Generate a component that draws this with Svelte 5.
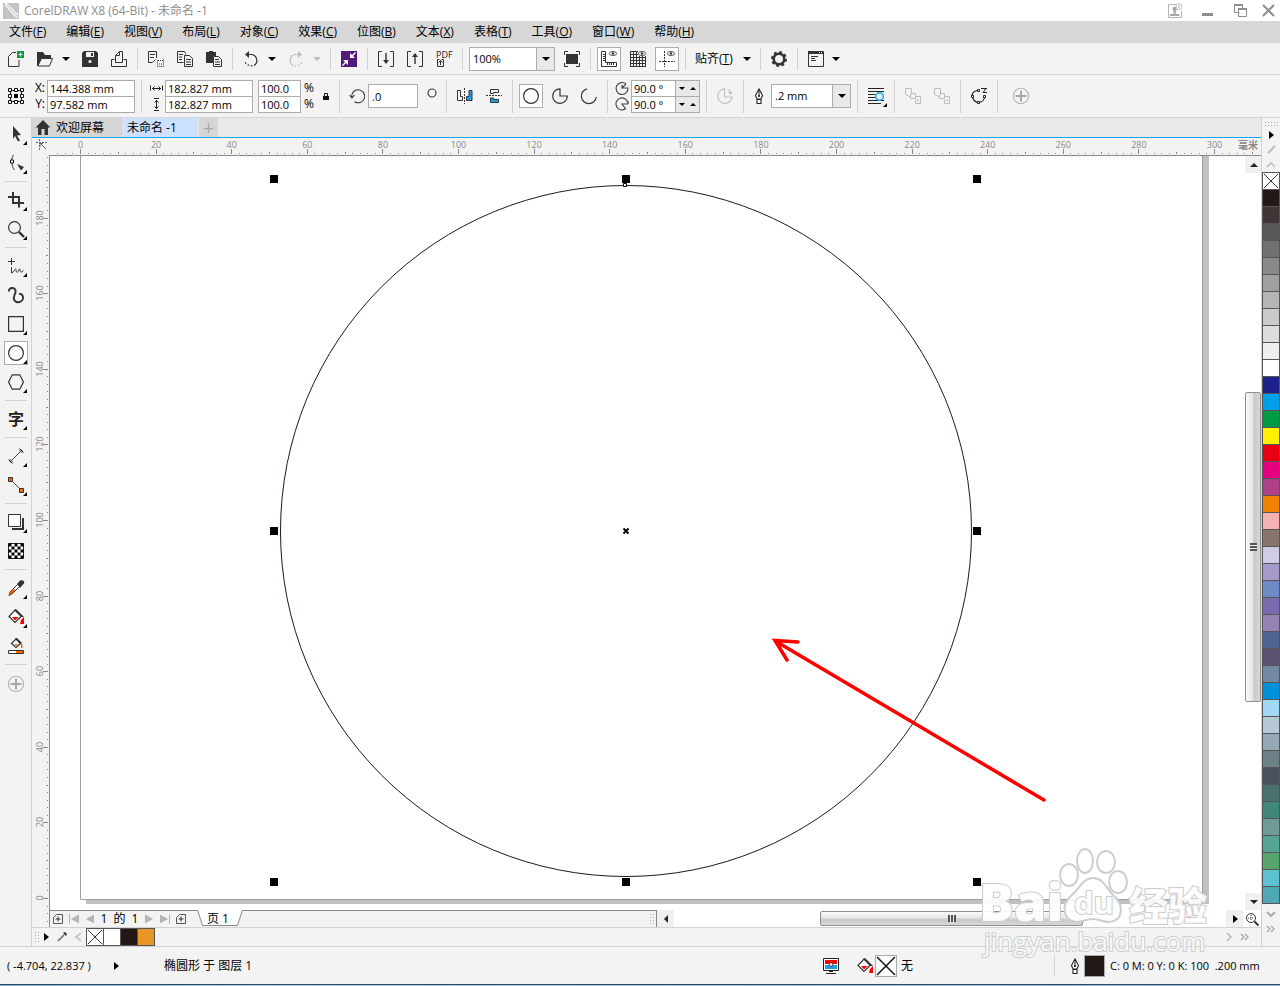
<script>
  const icons = {
    logo: '<path fill="#c4c4c4" d="M0 0h16v16H0z"/><path fill="#fff" d="M2 0l2 0 11 11v4L12 14 2 3z" opacity=".75"/><path fill="none" stroke="#c4c4c4" d="M4 2l10 11"/>',
    user: '<path fill="none" stroke="#b4b4b4" d="M9 1.500H1.500v13h13V8"/><path fill="#a8a8a8" d="M5.500 6a2.200 2.500 0 0 1 4.400 0c0 1-.6 2-1.200 2.500V11h3.500v2H3v-2h3.500V8.500C6 8 5.500 7 5.500 6z"/><circle cx="12" cy="3.500" r="3" fill="#fff" stroke="#c4c4c4"/><path stroke="#b4b4b4" d="M12 2v3"/>',
    min: '<path fill="#8e8e8e" d="M2 10h11v3H2z"/>',
    restore: '<path fill="none" stroke="#8e8e8e" d="M6.500 9.500h-5v-8h8v4"/><path stroke="#8e8e8e" stroke-width="2" d="M1 2h9M5 6h9"/><path fill="none" stroke="#8e8e8e" d="M5.500 5.500h8v8h-8z"/>',
    close: '<path stroke="#8e8e8e" stroke-width="2" d="M2 2l11 11M13 2L2 13"/>',
    new: '<path fill="none" stroke="#333" d="M8 1.500H4.500l-4 4v10h10.500V9"/><path fill="#0a9c3c" d="M9 0h7v7H9z"/><path stroke="#fff" d="M12.500 1.500v4M10.500 3.500h4"/>',
    open: '<path fill="#333" d="M0 1h6l2 3h6v3H5L1 15H0z"/><path fill="#f3f3f3" stroke="#333" d="M4.500 7.500h11l-3 7.500H.8z"/>',
    save: '<path fill="#333" d="M2 0h12l2 2v14H0V2z"/><path fill="#f3f3f3" d="M4 1h8v5H4z"/><path fill="#333" d="M9 2h2v3H9z"/><circle cx="8" cy="10.500" r="1.600" fill="#f3f3f3"/>',
    print: '<path fill="none" stroke="#333" d="M4.500 11.500h7v-11h-3l-4 4zM8.500.5v4h-4M3.500 8.500h-3v7h15v-7h-3"/>',
    cut: '<path fill="none" stroke="#333" d="M8.500 7V.5h-8v11h4l3-3M2 3.500h5M2 6.500h4"/><path fill="none" stroke="#333" stroke-dasharray="1 1" d="M15.500 8.500v7h-6v-6"/><path fill="none" stroke="#333" stroke-dasharray="1 1" d="M10 9.500h5M11 13h3"/>',
    copy: '<path fill="none" stroke="#333" d="M6.500 11.500h-6V.5h7l1 2v1M2 3.500h4M2 6h3M2 8.500h3"/><path fill="#f3f3f3" stroke="#333" d="M7.500 4.500h5l3 3v8h-8z"/><path stroke="#333" d="M9 8.500h5M9 11h5M9 13.500h5"/>',
    paste: '<path fill="#333" d="M0 1h3V0h4v1h3v4H7v7H0z"/><path fill="#f3f3f3" stroke="#333" d="M7.500 5.500h5l3 3v7h-8z"/><path stroke="#333" d="M9 8.500h4M9 11h5M9 13.500h5"/>',
    undo: '<path fill="none" stroke="#333" stroke-width="1.200" d="M4 3.500h5a6 6 0 0 1 2 11"/><path fill="#333" d="M6 0v7L2 3.500z"/><path fill="none" stroke="#333" stroke-width="1.300" stroke-dasharray="1.500 2" d="M9.500 14.700c-4 .5-7-1.500-8-5"/>',
    redo: '<path fill="none" stroke="#bdbdbd" stroke-width="1.200" d="M12 3.500H7a6 6 0 0 0-2 11"/><path fill="#bdbdbd" d="M10 0v7l4-3.500z"/><path fill="none" stroke="#bdbdbd" stroke-width="1.300" stroke-dasharray="1.500 2" d="M6.500 14.700c4 .5 7-1.500 8-5"/>',
    purple: '<path fill="#4f1a7b" d="M0 0h16v16H0z"/><path fill="#fff" d="M9 7V2l2 2 3-3 1 1-3 3 2 2zM7 9v5l-2-2-3 3-1-1 3-3-2-2z"/>',
    import: '<path fill="none" stroke="#333" d="M4 .5H.5v15H4M12 .5h3.500v15H12"/><path fill="#333" d="M7.300 2h1.400v7H11l-3 4-3-4h2.300z"/>',
    export: '<path fill="none" stroke="#333" d="M4 .5H.5v15H4M12 .5h3.500v15H12"/><path fill="#333" d="M7.300 13h1.400V6H11L8 2 5 6h2.300z"/>',
    pdf: '<path fill="none" stroke="#333" d="M3.500 8.500H1.500v7h6v-7h-2M4.500 14V9.500M2.500 11.500l2-2 2 2"/><text x="0" y="7" font-size="9" font-family="Open Sans" fill="#222">PDF</text>',
    full: '<path fill="#333" d="M2 3h12v10H2z"/><path fill="none" stroke="#333" d="M.5 4V.5H4M12 .5h3.500V4M15.500 12v3.500H12M4 15.500H.5V12"/>',
    ruler: '<path fill="none" stroke="#333" d="M.5.5h4v11h11v4H.5zM2 3.500h2M2 5.500h2M2 7.500h2M2 9.500h2M6.500 12v2M8.500 12v2M10.500 12v2M12.500 12v2"/><ellipse cx="12" cy="2.500" rx="3.700" ry="2" fill="#fff" stroke="#555"/><circle cx="12" cy="2.500" r="1.200" fill="#333"/>',
    grid: '<path fill="none" stroke="#333" d="M.5 0v16M3.500 0v16M6.500 0v16M9.500 5v11M12.500 5v11M15.500 5v11M0 .5h8M0 3.500h8M0 6.500h16M0 9.500h16M0 12.500h16M0 15.500h16"/><ellipse cx="12" cy="2.500" rx="3.700" ry="2" fill="#fff" stroke="#555"/><circle cx="12" cy="2.500" r="1.200" fill="#333"/>',
    guide: '<path fill="none" stroke="#333" stroke-dasharray="2 1" d="M5.500 0v16M0 10.500h16"/><ellipse cx="12" cy="2.500" rx="3.700" ry="2" fill="#fff" stroke="#555"/><circle cx="12" cy="2.500" r="1.200" fill="#333"/>',
    gear: '<circle cx="8" cy="8" r="5.300" fill="none" stroke="#333" stroke-width="2.600"/><circle cx="8" cy="8" r="7" fill="none" stroke="#333" stroke-width="2" stroke-dasharray="2.750 2.750"/>',
    window: '<path fill="none" stroke="#333" d="M.5.5h15v15H.5z"/><path fill="#333" d="M0 0h10v3H0z"/><path stroke="#333" d="M3 5.500h7M3 7.500h4M3 9.500h5M0 2.500h16"/><path stroke="#333" stroke-dasharray="1 1" d="M10 1.500h5"/>',
    origin: '<g fill="none" stroke="#111"><path d="M2.500 2.500h11v11h-11z"/><g fill="#f3f3f3"><path d="M.5.500h3v3h-3zM6.500.500h3v3h-3zM12.500.500h3v3h-3zM.5 6.500h3v3h-3zM12.500 6.500h3v3h-3zM.5 12.500h3v3h-3zM6.500 12.500h3v3h-3zM12.500 12.500h3v3h-3z"/></g></g><path d="M6 6h4v4H6z"/>',
    wide: '<path fill="none" stroke="#222" d="M2.500 5.500v5M14.500 5.500v5M4 8.500h9M6.500 6.500l-2 2 2 2M10.500 6.500l2 2-2 2"/>',
    tall: '<path fill="none" stroke="#222" d="M6 2.500h5M6 14.500h5M8.500 4v9M6.500 6.500l2-2 2 2M6.500 10.500l2 2 2-2"/>',
    lock: '<path fill="#111" d="M5 8h6v4H5z"/><path fill="none" stroke="#111" d="M6.500 8V5.500h3V8"/>',
    rotate: '<path fill="none" stroke="#333" stroke-width="1.100" d="M2.800 9.500a6.500 6.500 0 1 1 2.800 4.200M.5 7l2.500 2.800L5.500 7"/>',
    degree: '<circle cx="8" cy="5" r="4" fill="none" stroke="#444" stroke-width="1.200"/>',
    mirh: '<path fill="none" stroke="#333" d="M.5 2.500h3v6h2v4h-5z"/><path fill="none" stroke="#333" stroke-dasharray="2 1" d="M7.500 0v16"/><path fill="#1aa3e8" stroke="#333" d="M15 2.500h-3v6H9.500v4H15z"/>',
    mirv: '<path fill="none" stroke="#333" d="M4.500 5.500v-4h8v3h-5v1z"/><path fill="none" stroke="#333" stroke-dasharray="2 1" d="M0 7.500h16"/><path fill="#1aa3e8" stroke="#333" d="M4.500 10v4.500h8v-3h-5V10z"/>',
    ellipse: '<circle cx="8" cy="8" r="7.400" fill="none" stroke="#333" stroke-width="1.200"/>',
    pie: '<path fill="none" stroke="#333" stroke-width="1.200" d="M8 .8A7.300 7.300 0 1 0 15.300 8H8z"/>',
    arc: '<path fill="none" stroke="#333" stroke-width="1.200" d="M6 .8A7.500 7.500 0 1 0 15.300 9"/>',
    pie1: '<path fill="none" stroke="#444" stroke-width="1.100" d="M12 4A6 6 0 1 0 14 8H8L12 4M8 8V5"/>',
    pie2: '<path fill="none" stroke="#444" stroke-width="1.100" d="M13.800 7A6 6 0 1 0 11.500 12.700L8 8h6M14 5v3"/>',
    pieg: '<path fill="none" stroke="#c0c0c0" stroke-width="1.200" d="M7.500.8A7.300 7.300 0 1 0 15.200 9H7.500zM10.500 1.500c2 0 3 1 3 4M11.500 4l2 2 2-2"/>',
    pen: '<path fill="#fff" stroke="#222" stroke-width="1.100" d="M8 1L4.500 7.500 6 11h4l1.500-3.500zM6 11.500h4v4H6z"/><path stroke="#222" d="M8 2v6"/><circle cx="8" cy="8" r="1" />',
    wrap: '<path stroke="#222" stroke-width="1.200" d="M0 .5h16M0 3.500h16M0 6.500h7M0 9.500h7M0 12.500h16M0 15.500h13"/><circle cx="11.500" cy="8.500" r="3.800" fill="#f3f3f3" stroke="#16a4ea" stroke-width="1.500"/>',
    front: '<path fill="none" stroke="#bdbdbd" d="M.5.500h6v6l-2 2-4-2zM6.500 5.500h4v5h-5v-4M10.500 8.500h5v7h-5v-4"/><circle cx="13" cy="12.500" r="1" fill="#bdbdbd"/>',
    curve: '<path fill="none" stroke="#222" stroke-width="1.200" d="M6 2.500C2 3.500.8 6 1.500 9c1 3 3 5.500 6 5.500s6-2 6-6.500"/><path fill="#fff" stroke="#222" d="M6.500 1.500h2v2h-2zM.5 7.500h2v2h-2zM12.500 7.500h2v2h-2zM6.500 13.500h2v2h-2z"/><path stroke="#222" d="M10 .5h6M12 4.500h4M15 .5l-3 4"/>',
    plus: '<circle cx="8" cy="8" r="7.700" fill="none" stroke="#b4b4b4" stroke-width="1.100"/><path stroke="#a8a8a8" stroke-width="2" d="M8 2.500v11M2.500 8h11"/>',
    pick: '<path fill="#333" d="M5 0l8 9-4 .5 3 5-2 1-3-5.500-2 3z"/>',
    shape: '<path fill="none" stroke="#333" d="M5.500 0C3 3 3 11 6.500 15"/><path fill="#fff" stroke="#111" d="M2.500 5h3v3h-3z"/><path fill="#333" d="M9 9l7 3-3 3.500z"/>',
    crop: '<path fill="none" stroke="#333" stroke-width="2" d="M5 0v11h11M0 5h11v10.500"/>',
    zoom: '<circle cx="6.500" cy="6.500" r="5.900" fill="none" stroke="#333" stroke-width="1.200"/><path stroke="#333" stroke-width="2.400" d="M11 11l5 5"/>',
    free: '<path fill="none" stroke="#333" d="M3.500 0v7M0 3.500h7M3.500 9v6c3-1 3-4 4-4s0 4 2 3 1-3 2-3 0 4 2 3l2-1.500"/>',
    art: '<path fill="none" stroke="#333" stroke-width="1.900" d="M.8 4.500C.8 2 2.500.8 4.500 1s3.500 1.500 3 4-2.500 5-1.500 7.500 3.500 3 5.500 2.500 4-2.500 3.500-5-2-3.500-4-3"/>',
    rect: '<path fill="none" stroke="#333" stroke-width="1.200" d="M.6.600h14.800v14.800H.6z"/>',
    hex: '<path fill="none" stroke="#333" stroke-width="1.200" d="M4.200.8h7.600L15.400 8l-3.600 7.200H4.200L.6 8z"/>',
    text: '<text x="0" y="14" font-size="16" font-weight="700" font-family="Noto Sans CJK SC" fill="#222">字</text>',
    dim: '<path fill="none" stroke="#444" d="M2.500 13.500l11-11M.5 11.500l4 4M11.500.5l4 4M2 11v3h3M11 2h3v3"/>',
    conn: '<path stroke="#444" d="M3 3l10 10"/><path fill="#f60" stroke="#333" d="M.5.500h4v4h-4zM11.500 11.500h4v4h-4z"/>',
    shadow: '<path fill="#333" d="M14 4h2v12H4v-2h10z"/><path fill="#fff" stroke="#333" d="M.5.500h12v12H.5z"/>',
    drop: '<path fill="#333" d="M9 4l3-3.500q3-1 4 1t-1 3L12 8z"/><path fill="#fff" stroke="#333" d="M9.500 4.500l2 2L4 14l-3 1.500L2 12z"/><path fill="#e85d00" d="M5 9l2.500 1L4 14l-3 1.500L2 12z"/>',
    fill: '<path fill="#fff" stroke="#333" stroke-width="1.200" d="M1 7.500L7 1l6.500 6L7 13.500z"/><path fill="#333" d="M6 1l2-1 8 8-3 0z"/><path fill="#f00" d="M4 8h6.500L7 11.500zM16 8v7h-4l1-4z"/>',
    smart: '<path fill="#fff" stroke="#333" stroke-width="1.200" d="M3.500 5.500L8 1l4.500 4.500L8 9.500z"/><path fill="#333" d="M7 0h2l5 5-2 1z"/><path fill="#f60" d="M6 6h4L8 8zM13 5l1.500 2v3H13z"/><path fill="#fff" stroke="#333" d="M.5 12.500h15v3H.5z"/><path fill="#f60" d="M8 13h7v2H8z"/>',
    home: '<path fill="#333" d="M8 0l7.500 7.500H13V15H9.500V9h-3v6H3V7.500H.5z"/>',
    corner: '<path fill="none" stroke="#666" stroke-dasharray="2 1" d="M4 4.500h11M7.500 1v12"/><path fill="none" stroke="#666" d="M8 5l6 6M11 5.500H8V9"/>',
    addpage: '<path fill="none" stroke="#555" d="M6.500 3.500h6v9h-9v-6z"/><path stroke="#333" d="M8 5.500v5M5.500 8h5"/>',
    first: '<path stroke="#b4b4b4" d="M3.500 3v10"/><path fill="#b4b4b4" d="M13 3.500v9L5 8z"/>',
    prev: '<path fill="#b4b4b4" d="M12 3.500v9L4 8z"/>',
    next: '<path fill="#b4b4b4" d="M4 3.500v9L12 8z"/>',
    last: '<path stroke="#b4b4b4" d="M12.500 3v10"/><path fill="#b4b4b4" d="M3 3.500v9L11 8z"/>',
    play: '<path d="M6 4v8l5-4z"/>',
    left: '<path fill="#222" d="M10 4v8L6 8z"/>',
    up: '<path fill="#222" d="M4 10h8L8 6z"/>',
    down: '<path fill="#222" d="M4 6h8l-4 4z"/>',
    miniDrop: '<path fill="#333" d="M9 4l2-1 2 2-1 2z"/><path stroke="#666" stroke-width="1.500" d="M10 6l-6 6"/>',
    miniDropG: '<path stroke="#bbb" stroke-width="2" d="M12 4l-7 7"/>',
    chevL: '<path fill="none" stroke="#c4c4c4" stroke-width="1.800" d="M11 4L6 8l5 4"/>',
    chevR: '<path fill="none" stroke="#b8b8b8" stroke-width="1.500" d="M6 4l4 4-4 4"/>',
    chevU: '<path fill="none" stroke="#c8c8c8" stroke-width="2" d="M4 10l4-4 4 4"/>',
    chevD: '<path fill="none" stroke="#a8a8a8" stroke-width="1.800" d="M4 6l4 4 4-4"/>',
    more: '<path fill="none" stroke="#aaa" stroke-width="1.300" d="M4 5l3 3-3 3M8 5l3 3-3 3"/>',
    nav: '<circle cx="7" cy="7" r="4.500" fill="none" stroke="#333"/><path stroke="#333" stroke-width="2" d="M10.500 10.500l4 4"/><path stroke="#333" stroke-dasharray="1 1" d="M7 4v6M4 7h6"/>',
    monitor: '<path fill="#fff" stroke="#222" d="M.5.500h15v12H.5z"/><path fill="#f00" d="M2 2h12v4H2z"/><path fill="#18a0ea" d="M2 7h12v4H2z"/><circle cx="8" cy="6.500" r="2" fill="#ddd" stroke="#444"/><path fill="#222" d="M6 13h4v1H6zM3 15h10v1H3z"/>',
    none: '<path fill="none" stroke="#333" d="M1 1l14 14M15 1L1 15"/>'
  };

  const menus = [
    ['文件', 'F'], ['编辑', 'E'], ['视图', 'V'], ['布局', 'L'], ['对象', 'C'], ['效果', 'C'],
    ['位图', 'B'], ['文本', 'X'], ['表格', 'T'], ['工具', 'O'], ['窗口', 'W'], ['帮助', 'H']
  ];

  const tools = [
    ['pick', '选择', 1], ['shape', '形状', 1], null,
    ['crop', '裁剪', 1], ['zoom', '缩放', 1], null,
    ['free', '手绘', 1], ['art', '艺术笔', 0], ['rect', '矩形', 1], ['ellipse', '椭圆形', 1], ['hex', '多边形', 1], null,
    ['text', '文本', 1], null,
    ['dim', '平行度量', 1], ['conn', '连接器', 1], null,
    ['shadow', '阴影', 1], ['checker', '透明度', 0], null,
    ['drop', '颜色滴管', 1], ['fill', '交互式填充', 1], ['smart', '智能填充', 0], null
  ];

  let checks = '<path fill="#fff" stroke="#222" d="M.5.500h15v15H.5z"/>';
  for (let r = 0; r < 5; r++)
    for (let c = 0; c < 5; c++)
      if ((r + c) % 2 === 0) checks += `<path d="M${c * 3} ${r * 3}h3v3h-3z" transform="translate(.5 .5)"/>`;
  icons.checker = checks;

  const palette = [
    '#231815', '#3e3535', '#595757', '#727171', '#898989', '#9fa0a0', '#b5b5b6', '#c9caca', '#dcdddd', '#eeefef',
    '#ffffff', '#1d2088', '#00a0e9', '#009944', '#fff100', '#e60012', '#e4007f', '#b04187', '#f08300', '#f5b2b2',
    '#87766c', '#d0cce6', '#a69acd', '#6e8ac6', '#7a6ab0', '#9384b3', '#4f6591', '#5a5270', '#7488a3', '#0091db',
    '#a0d8f5', '#b5c8d6', '#94a9b5', '#6c8088', '#47525c', '#4a7070', '#3f8878', '#6f9a98', '#55a594', '#57a46c',
    '#5ec3d0', '#4fa9b5'
  ];

  // Ruler scale: pixels per millimetre at 100% zoom
  const SCALE = 3.78;
  const ticks = (from, to) => {
    const out = [];
    for (let v = from; v <= to; v += 2) out.push(v);
    return out;
  };
  let rulerWidth = $state(1212);
  const hTicks = $derived(ticks(-6, (rulerWidth - 34) / SCALE));
  const vTicks = ticks(-6, 196);
  const tickLen = (v) => (v % 20 === 0 ? 5 : v % 10 === 0 ? 2 : 1);

  const handleX = [224, 576, 927];
  const handleY = [23, 375, 726];

  let zoom = $state('100%');
  let tool = $state('ellipse');
</script>

{#snippet icon(name)}
  <svg class="ic" width="16" height="16" viewBox="0 0 16 16" aria-hidden="true">{@html icons[name]}</svg>
{/snippet}

{#snippet btn(name, label, on = false)}
  <button class="ib" class:on title={label} aria-label={label}>{@render icon(name)}</button>
{/snippet}

{#snippet caret(label, off = false)}
  <button class="caret" class:off aria-label={label}><i class="tri"></i></button>
{/snippet}

<div class="app">
  <header class="title">
    {@render icon('logo')}
    <h1>CorelDRAW X8 (64-Bit) - 未命名 -1</h1>
    <button class="plain" aria-label="登录">{@render icon('user')}</button>
    <button class="plain" aria-label="最小化">{@render icon('min')}</button>
    <button class="plain" aria-label="还原">{@render icon('restore')}</button>
    <button class="plain last" aria-label="关闭">{@render icon('close')}</button>
  </header>

  <nav class="menu">
    {#each menus as [name, key]}
      <button class="plain">{name}(<u>{key}</u>)</button>
    {/each}
  </nav>

  <div class="bar standard">
    {@render btn('new', '新建')}
    {@render btn('open', '打开')}
    {@render caret('最近打开')}
    {@render btn('save', '保存')}
    {@render btn('print', '打印')}
    <i class="sep"></i>
    {@render btn('cut', '剪切')}
    {@render btn('copy', '复制')}
    {@render btn('paste', '粘贴')}
    <i class="sep"></i>
    {@render btn('undo', '撤消')}
    {@render caret('撤消列表')}
    {@render btn('redo', '重做')}
    {@render caret('重做列表', true)}
    <i class="sep"></i>
    {@render btn('purple', '搜索内容')}
    <i class="sep"></i>
    {@render btn('import', '导入')}
    {@render btn('export', '导出')}
    {@render btn('pdf', '发布为 PDF')}
    <i class="sep"></i>
    <div class="combo zoomlevel">
      <input aria-label="缩放级别" bind:value={zoom} />
      <button aria-label="缩放级别列表"><i class="tri"></i></button>
    </div>
    {@render btn('full', '全屏预览')}
    <i class="sep"></i>
    {@render btn('ruler', '显示标尺', true)}
    {@render btn('grid', '显示网格')}
    {@render btn('guide', '显示辅助线', true)}
    <i class="sep"></i>
    <button class="plain snap">贴齐(<u>T</u>)<i class="tri"></i></button>
    <i class="sep"></i>
    {@render btn('gear', '选项')}
    <i class="sep"></i>
    {@render btn('window', '应用程序启动器')}
    {@render caret('启动器列表')}
  </div>

  <div class="bar props">
    {@render btn('origin', '对象原点')}
    <div class="pair xy">
      <label for="px">X:</label><input id="px" value="144.388 mm" />
      <label for="py">Y:</label><input id="py" value="97.582 mm" />
    </div>
    <i class="sep"></i>
    <div class="pair size">
      <label for="pw" aria-label="宽度">{@render icon('wide')}</label><input id="pw" value="182.827 mm" />
      <label for="ph" aria-label="高度">{@render icon('tall')}</label><input id="ph" value="182.827 mm" />
    </div>
    <div class="pair scale">
      <input id="sx" value="100.0" /><label for="sx">%</label>
      <input id="sy" value="100.0" /><label for="sy">%</label>
    </div>
    <button class="plain lock" aria-label="锁定比率">{@render icon('lock')}</button>
    <i class="sep"></i>
    <div class="field rot">
      <label for="rot" aria-label="旋转角度">{@render icon('rotate')}</label><input id="rot" value=".0" />
      {@render icon('degree')}
    </div>
    <i class="sep"></i>
    {@render btn('mirh', '水平镜像')}
    {@render btn('mirv', '垂直镜像')}
    <i class="sep"></i>
    {@render btn('ellipse', '椭圆形', true)}
    {@render btn('pie', '饼图')}
    {@render btn('arc', '弧')}
    <i class="sep"></i>
    <div class="pair angle">
      <label for="a1" aria-label="起始角度">{@render icon('pie1')}</label><input id="a1" value="90.0 °" />
      <span class="spin"><button aria-label="减小起始角度"><i class="tri s"></i></button><button aria-label="增大起始角度"><i class="tri s up"></i></button></span>
      <label for="a2" aria-label="结束角度">{@render icon('pie2')}</label><input id="a2" value="90.0 °" />
      <span class="spin"><button aria-label="减小结束角度"><i class="tri s"></i></button><button aria-label="增大结束角度"><i class="tri s up"></i></button></span>
    </div>
    <i class="sep"></i>
    {@render btn('pieg', '更改方向')}
    <i class="sep"></i>
    <div class="field outline">
      <label for="ow" aria-label="轮廓宽度">{@render icon('pen')}</label>
      <div class="combo">
        <input id="ow" value=".2 mm" />
        <button aria-label="轮廓宽度列表"><i class="tri"></i></button>
      </div>
    </div>
    <i class="sep"></i>
    <button class="ib" aria-label="文本换行">{@render icon('wrap')}<i class="fly"></i></button>
    <i class="sep"></i>
    {@render btn('front', '到图层前面')}
    {@render btn('front', '到图层后面')}
    <i class="sep"></i>
    {@render btn('curve', '转换为曲线')}
    <i class="sep"></i>
    <div class="more">{@render btn('plus', '快速自定义')}</div>
  </div>

  <div class="work">
    <aside class="tools">
      {#each tools as t}
        {#if t}
          <button class="ib" class:on={tool === t[0]} title={t[1]} aria-label={t[1]} onclick={() => (tool = t[0])}>
            {@render icon(t[0])}
            {#if t[2]}<i class="fly"></i>{/if}
          </button>
        {:else}
          <i class="hsep"></i>
        {/if}
      {/each}
      <div class="add">{@render btn('plus', '快速自定义')}</div>
    </aside>

    <main>
      <div class="tabs">
        <button class="tab home">{@render icon('home')}欢迎屏幕</button>
        <button class="tab active">未命名 -1</button>
        <button class="tab plus" aria-label="新建文档">+</button>
      </div>

      <div class="view">
        <div class="corner">{@render icon('corner')}</div>
        <div class="hruler" bind:clientWidth={rulerWidth}>
          <svg aria-hidden="true">
            {#each hTicks as v}
              <rect x={Math.round(31 + v * SCALE)} y={16 - tickLen(v)} width="1" height={tickLen(v)} />
              {#if v >= 0 && v % 20 === 0}<text x={31.5 + v * SCALE} y="10" text-anchor="middle">{v}</text>{/if}
            {/each}
          </svg>
          <span>毫米</span>
        </div>
        <div class="vruler">
          <svg aria-hidden="true">
            {#each vTicks as v}
              {@const y = Math.round(742 - v * SCALE)}
              <rect x={16 - tickLen(v)} {y} width={tickLen(v)} height="1" />
              {#if v >= 0 && v % 20 === 0}<text transform="translate(11 {y}) rotate(-90)" text-anchor="middle">{v}</text>{/if}
            {/each}
          </svg>
        </div>

        <div class="canvas">
          <svg class="drawing" role="img" aria-label="椭圆形">
            <path d="M36 744H1153V0h6v748H36z" fill="#c0c0c0" />
            <path d="M30.500 0V743.500H1152.500V0" fill="none" stroke="#a0a0a0" />
            <circle cx="576" cy="375" r="345.500" fill="none" stroke="#231815" />
            <path d="M573.500 372.500l5 5M578.500 372.500l-5 5" stroke="#000" stroke-width="2" />
            {#each handleX as x, i}
              {#each handleY as y, j}
                {#if i !== 1 || j !== 1}<rect x={x - 4} y={y - 4} width="8" height="8" />{/if}
              {/each}
            {/each}
            <path d="M573.500 27.500h3v3h-3z" fill="#fff" stroke="#000" />
            <path d="M994 644L727 486M748 486L725 484.500L737 504" fill="none" stroke="#f00" stroke-width="3.500" stroke-linecap="round" />
          </svg>
          <div class="vscroll">
            <button aria-label="向上滚动">{@render icon('up')}</button>
            <div class="track"><div class="thumb"><i></i></div></div>
            <button aria-label="向下滚动">{@render icon('down')}</button>
          </div>
        </div>

        <div class="pager">
          <div class="pages">
            <button class="plain" aria-label="在前面添加页">{@render icon('addpage')}</button>
            <button class="plain" aria-label="第一页">{@render icon('first')}</button>
            <button class="plain" aria-label="上一页">{@render icon('prev')}</button>
            <span class="count"><span>1</span><span>的</span><span>1</span></span>
            <button class="plain" aria-label="下一页">{@render icon('next')}</button>
            <button class="plain" aria-label="最后一页">{@render icon('last')}</button>
            <button class="plain" aria-label="在后面添加页">{@render icon('addpage')}</button>
            <button class="plain page">
              <svg width="46" height="17" aria-hidden="true"><path fill="#fff" d="M0 0h46l-5 16H5z" /><path fill="none" stroke="#888" d="M.5 0l5 15.500h35l5-15.500" /></svg>
              <span>页 1</span>
            </button>
            <i class="dots end"></i>
          </div>
          <div class="hscroll">
            <button aria-label="向左滚动">{@render icon('left')}</button>
            <div class="track"><div class="thumb"><i></i></div></div>
            <button aria-label="向右滚动">{@render icon('play')}</button>
            <button class="nav" aria-label="导航器">{@render icon('nav')}</button>
          </div>
        </div>
      </div>

      <div class="docpal">
        <i class="dots"></i>
        <button class="plain" aria-label="调色板菜单">{@render icon('play')}</button>
        <button class="plain" aria-label="滴管">{@render icon('miniDrop')}</button>
        <button class="plain" aria-label="向左">{@render icon('chevL')}</button>
        <div class="chips">
          <button class="chip" aria-label="无填充">{@render icon('none')}</button>
          <button class="chip" aria-label="白" style:background="#fff"></button>
          <button class="chip" aria-label="黑" style:background="#231815"></button>
          <button class="chip" aria-label="橙" style:background="#ea9627"></button>
        </div>
        <i class="grow"></i>
        <button class="plain" aria-label="向右">{@render icon('chevR')}</button>
        <button class="plain" aria-label="更多">{@render icon('more')}</button>
      </div>
    </main>

    <aside class="palette">
      <i class="dots wide"></i>
      <button class="plain" aria-label="调色板菜单">{@render icon('play')}</button>
      <button class="plain" aria-label="滴管">{@render icon('miniDropG')}</button>
      <button class="plain" aria-label="向上">{@render icon('chevU')}</button>
      <div class="chips col">
        <button class="chip" aria-label="无填充">{@render icon('none')}</button>
        {#each palette as c}
          <button class="chip" aria-label={c} style:background={c}></button>
        {/each}
      </div>
      <button class="plain" aria-label="向下">{@render icon('chevD')}</button>
      <button class="plain" aria-label="更多">{@render icon('more')}</button>
    </aside>
  </div>

  <footer class="status">
    <span class="coords">( -4.704, 22.837 )</span>
    <button class="plain" aria-label="状态菜单">{@render icon('play')}</button>
    <span class="object">椭圆形 于 图层 1</span>
    <div class="fillinfo">
      {@render icon('monitor')}
      <span class="group">{@render icon('fill')}<span class="sw x"><svg width="20" height="20" viewBox="0 0 20 20" aria-hidden="true"><path d="M1 1l18 18M19 1L1 19" stroke="#111" stroke-width="1.500" /></svg></span></span>
      <span>无</span>
    </div>
    <div class="lineinfo">
      {@render icon('pen')}
      <span class="sw k"></span>
      <span class="cmyk">C: 0 M: 0 Y: 0 K: 100&nbsp; .200 mm</span>
    </div>
  </footer>
  <div class="edge"></div>

  <svg class="mark" width="240" height="116" aria-hidden="true">
    <g fill="#fff" stroke="#cdcdcd" stroke-width="2" fill-opacity=".9">
      <text x="-3" y="75" font-size="52" font-weight="800">Bai</text>
      <ellipse cx="87" cy="29" rx="9" ry="11" />
      <ellipse cx="103" cy="15" rx="8" ry="12" />
      <ellipse cx="124" cy="16" rx="9" ry="11" />
      <ellipse cx="136" cy="36" rx="9" ry="11" />
      <path d="M111 32c10 0 13 10 20 17 12 10 10 26-4 27-6 0-10-3-16-3s-10 3-16 3c-14-1-17-17-5-27 8-7 11-17 21-17z" />
      <text x="92" y="68" font-size="31" font-weight="700">du</text>
      <text x="147" y="74" font-size="39" font-weight="900" class="cjk">经验</text>
      <text x="2" y="105" font-size="26" class="url">jingyan.baidu.com</text>
    </g>
  </svg>
</div>

<style>
  :global(body) { margin: 0; background: #f3f3f3; }
  .app {
    position: relative;
    display: flex;
    flex-direction: column;
    min-height: 100vh;
    background: #f3f3f3;
    color: #000;
    font: 12px/16px "Open Sans", "Noto Sans CJK SC", sans-serif;
  }
  button, input { font: inherit; color: inherit; margin: 0; padding: 0; border: 0; box-sizing: border-box; }
  button { background: none; }
  input { min-width: 0; font-size: 11px; border-radius: 0; background: #fff; }
  .ic { display: block; flex: none; overflow: visible; }
  .plain { display: flex; align-items: center; white-space: nowrap; }
  .tri { display: block; border: 4px solid transparent; border-top-color: #000; border-bottom: 0; }
  .tri.s { border-width: 3px; border-bottom: 0; }
  .tri.s.up { border-bottom: 3px solid #000; border-top: 0; }

  .title { display: flex; align-items: center; height: 21px; padding: 0 3px; background: #fff; }
  .title h1 { flex: 1; margin: 0 0 0 5px; font-size: 12px; font-weight: 400; color: #8c8c8c; white-space: nowrap; }
  .title .plain { margin-left: 17px; }
  .title .last { margin-left: 12px; }

  .menu { display: flex; gap: 20px; height: 22px; padding-left: 9px; background: #d7d7d7; }

  .bar { display: flex; align-items: center; border-bottom: 1px solid #d6d6d6; padding-left: 2px; }
  .standard { height: 31px; }
  .props { height: 42px; }
  .bar > * { flex: none; }
  .ib {
    position: relative;
    display: flex;
    flex: none;
    align-items: center;
    justify-content: center;
    width: 24px;
    height: 24px;
    margin: 0 3px 0 2px;
    border: 1px solid transparent;
  }
  .ib.on { background: #fff; border-color: #acacac; }
  .fly { position: absolute; right: 0; bottom: 0; border: 2px solid #000; border-left-color: transparent; border-top-color: transparent; }
  .caret { display: flex; justify-content: center; width: 16px; padding-right: 5px; }
  .caret.off .tri { border-top-color: #bdbdbd; }
  .sep { width: 1px; height: 22px; margin: 0 4px 0 3px; background: #d2d2d2; }
  .props .sep { height: 33px; }

  .combo { display: flex; height: 24px; border: 1px solid #acacac; box-sizing: border-box; }
  .combo input { flex: 1; padding-left: 3px; }
  .combo button { display: flex; align-items: center; justify-content: center; width: 18px; border-left: 1px solid #acacac; background: #e9e9e9; }
  .zoomlevel { width: 86px; margin: 0 3px 0 2px; }
  .snap { padding: 0 6px 0 5px; }
  .snap .tri { margin-left: 10px; }

  .pair { display: grid; grid-auto-rows: 16px; align-items: center; }
  .pair input { height: 17px; width: 100%; border: 1px solid #acacac; padding-left: 2px; }
  .pair label { display: flex; align-items: center; }
  .xy { grid-template-columns: 14px 88px; margin: 0 3px 0 2px; }
  .xy label { justify-content: flex-end; padding-right: 2px; }
  .size { grid-template-columns: 17px 88px; margin-left: 2px; }
  .scale { grid-template-columns: 43px 16px; column-gap: 3px; margin-left: 5px; }
  .lock { margin: 0 2px 0 -2px; }
  .field { display: flex; align-items: center; }
  .field label { display: flex; margin-right: 3px; }
  .rot { margin: 0 3px 0 5px; }
  .rot input { width: 50px; height: 24px; border: 1px solid #acacac; padding-left: 3px; margin-right: 6px; }
  .angle { grid-template-columns: 17px 45px 24px; margin: 0 3px 0 2px; }
  .spin { display: flex; height: 17px; box-sizing: border-box; border: 1px solid #acacac; border-left: 0; background: #e9e9e9; }
  .spin button { flex: 1; display: flex; align-items: center; justify-content: center; }
  .outline { margin: 0 3px; }
  .outline label { margin-right: 4px; }
  .outline .combo { width: 80px; }
  .more { margin-left: 5px; }

  .work { display: flex; flex: 1; border-bottom: 1px solid #d2d2d2; }
  .tools { flex: none; width: 29px; padding: 2px 0 0 2px; border-right: 1px solid #d2d2d2; }
  .tools > .ib { margin: 2px 3px 3px 2px; }
  .tools > .ib + .ib { margin-top: 5px; }
  .hsep { display: block; height: 1px; width: 22px; margin: 3px 0 6px 3px; background: #d2d2d2; }
  .tools .ib:has(+ .hsep) { margin-bottom: 6px; }
  .tools .add { padding-top: 1px; }

  main { display: flex; flex: 1; flex-direction: column; min-width: 0; }
  .tabs { display: flex; height: 19px; background: #e9e9e9; border-bottom: 1px solid #16a4ea; }
  .tab { display: flex; align-items: center; background: #d6d6d6; margin-right: 1px; }
  .tab.home { width: 91px; padding-left: 3px; gap: 5px; }
  .tab.active { width: 74px; padding-left: 3px; background: #cce0ff; }
  .tab.plus { width: 19px; justify-content: center; font-size: 20px; color: #a8a8a8; }

  .view { display: grid; flex: 1; grid-template-columns: 17px 1fr; grid-template-rows: 18px 1fr 17px; }
  .corner { display: flex; }
  .hruler { position: relative; border-bottom: 1px solid #888; overflow: hidden; }
  .hruler span { position: absolute; right: 3px; top: 0; font-size: 10px; line-height: 14px; font-weight: 700; color: #888; background: #f3f3f3; }
  .vruler { position: relative; grid-row: 2 / 4; overflow: hidden; }
  .hruler svg, .vruler svg { position: absolute; left: 0; top: 0; width: 100%; height: 100%; fill: #888; font-size: 9px; }
  .canvas { position: relative; display: flex; justify-content: flex-end; border-left: 1px solid #888; background: #fff; overflow: hidden; }
  .drawing { position: absolute; left: 0; top: 0; width: 100%; height: 100%; }

  .vscroll { position: relative; display: flex; flex-direction: column; width: 16px; }
  .vscroll button, .hscroll button { display: flex; flex: none; align-items: center; justify-content: center; width: 17px; height: 17px; background: #f0f0f0; }
  .vscroll .track { display: grid; flex: 1; grid-template-rows: 219fr 310fr 191fr; }
  .vscroll .thumb { grid-row: 2; background: linear-gradient(90deg, #fafafa, #e6e6e6 45%, #c9c9c9 60%, #d8d8d8); }
  .thumb { display: flex; align-items: center; justify-content: center; border: 1px solid #8e8e8e; border-radius: 2px; }
  .vscroll .thumb i { width: 7px; height: 8px; background: repeating-linear-gradient(#555 0 2px, #eee 2px 3px); }
  .pager { display: flex; min-width: 0; }
  .pages { display: flex; flex: none; width: 50.2%; box-sizing: border-box; border: 1px solid #888; border-bottom: 0; }
  .pages .plain { width: 16px; }
  .count { display: flex; justify-content: center; gap: 6px; width: 43px; white-space: nowrap; }
  .pages .plain.page { position: relative; width: 46px; height: 17px; margin: -1px 0 0 8px; justify-content: center; }
  .page svg { position: absolute; left: 0; top: 0; }
  .page span { position: relative; padding-right: 4px; }
  .dots { flex: none; width: 6px; height: 12px; margin: 3px 2px; background: radial-gradient(#aaa 1px, transparent 1px) 0 0 / 3px 3px; }
  .dots.end { margin: 2px 1px 0 auto; }
  .hscroll { display: flex; flex: 1; background: #fff; }
  .hscroll .nav { width: 18px; background: #fff; }
  .hscroll .track { display: grid; flex: 1; grid-template-columns: 146fr 263fr 143fr; }
  .hscroll .thumb { grid-column: 2; height: 13px; margin-top: 1px; background: linear-gradient(#fafafa, #e6e6e6 45%, #c9c9c9 60%, #d8d8d8); }
  .hscroll .thumb i { width: 8px; height: 7px; background: repeating-linear-gradient(90deg, #555 0 2px, #eee 2px 3px); }

  .docpal { display: flex; align-items: center; height: 18px; border-top: 1px solid #d2d2d2; padding-right: 8px; }
  .chips { display: flex; border: 1px solid #555; }
  .docpal .dots { margin-right: -2px; }
  .grow { flex: 1; }
  .chip { display: block; flex: none; width: 17px; height: 16px; border-right: 1px solid #555; background: #fff; }
  .chip:last-child { border-right: 0; width: 16px; }
  .palette { flex: none; display: flex; flex-direction: column; align-items: center; width: 18px; border-left: 1px solid #d2d2d2; }
  .palette .plain { height: 15px; }
  .dots.wide { width: 15px; height: 6px; margin: 3px 0 0; }
  .chips.col { flex-direction: column; border-bottom: 0; margin-bottom: 2px; }
  .col .chip { width: 16px; height: 17px; border-right: 0; border-bottom: 1px solid #555; overflow: hidden; }

  .status { display: flex; align-items: center; height: 37px; padding: 0 18px 0 7px; }
  .status > * { flex: none; }
  .coords { width: 101px; font-size: 11px; }
  .status .object { flex: 1; margin-left: 40px; }
  .fillinfo { display: flex; align-items: center; width: 231px; gap: 4px; border-right: 1px solid #d2d2d2; height: 22px; }
  .group { display: flex; align-items: center; gap: 2px; margin-left: 14px; }
  .sw { display: block; width: 20px; height: 20px; border: 1px solid #aaa; }
  .sw.x { background: #fff; }
  .sw svg { display: block; }
  .sw.k { width: 19px; background: #231815; }
  .lineinfo { display: flex; align-items: center; gap: 5px; padding-left: 12px; font-size: 11px; }
  .lineinfo .sw { margin-left: -4px; }
  .cmyk { min-width: 152px; }
  .edge { height: 1px; border-top: 1px solid #2b4660; background: linear-gradient(90deg, #86b4d2, #b9d6ea 20%, #9dbad6); }

  .mark { position: absolute; right: 58px; bottom: 24px; pointer-events: none; overflow: visible; }
  .mark text { paint-order: stroke; font-family: "Open Sans", sans-serif; }
  .mark .cjk { font-family: "Noto Sans CJK SC", sans-serif; }
</style>
